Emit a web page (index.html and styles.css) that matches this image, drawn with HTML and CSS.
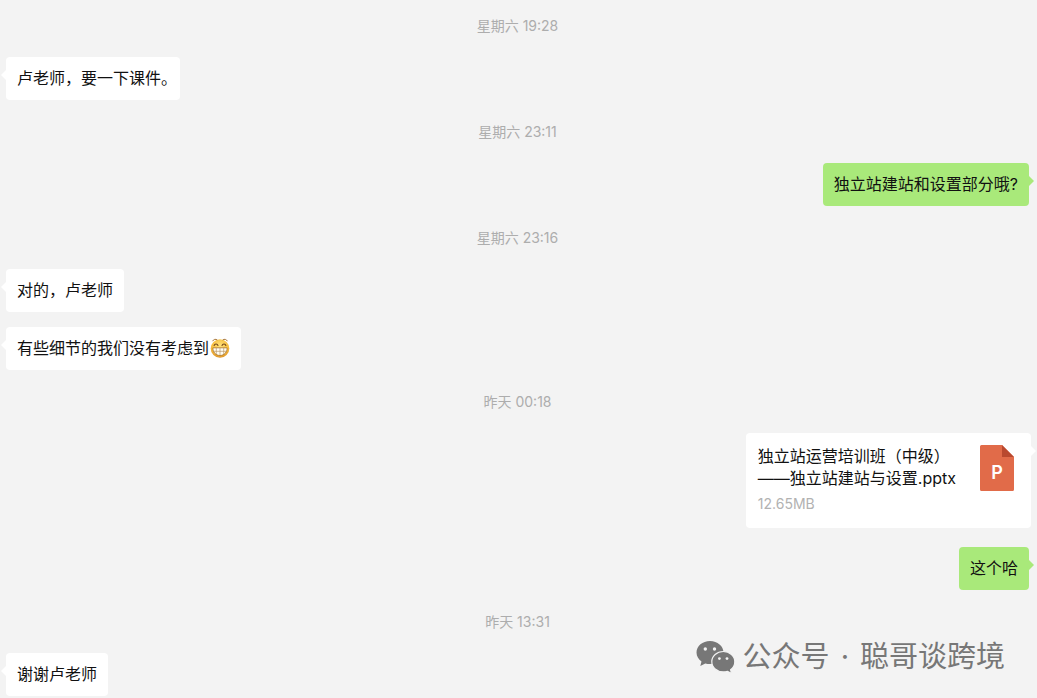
FILE: index.html
```html
<!DOCTYPE html>
<html lang="zh-CN">
<head>
<meta charset="utf-8">
<meta name="viewport" content="width=device-width, initial-scale=1">
<title>聊天记录</title>
<link rel="stylesheet" href="styles.css">
</head>
<body>
<main class="chat">
  <time class="stamp">星期六 19:28</time>
  <p class="bubble in">卢老师，要一下课件<span class="stop">。</span></p>
  <time class="stamp">星期六 23:11</time>
  <p class="bubble out">独立站建站和设置部分哦?</p>
  <time class="stamp">星期六 23:16</time>
  <p class="bubble in">对的，卢老师</p>
  <p class="bubble in">有些细节的我们没有考虑到<svg class="emoji" viewBox="0 0 20 20" role="img" aria-label="呲牙">
    <defs>
      <radialGradient id="face" cx=".5" cy=".35" r=".65">
        <stop offset="0" stop-color="#ffe27a"/>
        <stop offset=".7" stop-color="#f7bd3c"/>
        <stop offset="1" stop-color="#dc922a"/>
      </radialGradient>
    </defs>
    <circle cx="10" cy="10.5" r="9.3" fill="url(#face)"/>
    <path d="M2.600 3.200C3.400 1.300 5.800.7 7.300 2M12.700 2c1.500-1.300 3.900-.7 4.700 1.200" fill="none" stroke="#a8763c" stroke-width="1"/>
    <path d="M4.200 7.400c.6-1.900 3-1.900 3.700 0M12.100 7.400c.7-1.900 3.100-1.900 3.700 0" fill="none" stroke="#70451c" stroke-width="1.200" stroke-linecap="round"/>
    <path d="M2.900 9.800h14.200c.2 4.100-2.800 7.700-7.100 7.700S2.700 13.900 2.900 9.800z" fill="#fffdf4" stroke="#a8712a" stroke-width=".8"/>
    <path d="M3.200 13.300h13.600M6.300 10v6.500M10 10v7.300M13.700 10v6.500" stroke="#b99868" stroke-width=".7"/>
  </svg></p>
  <time class="stamp">昨天 00:18</time>
  <article class="file">
    <div class="file-text">
      <h2 class="file-name">独立站运营培训班（中级）<br>——独立站建站与设置.pptx</h2>
      <span class="file-size">12.65MB</span>
    </div>
    <div class="file-icon">
      <svg class="file-sheet" viewBox="0 0 34 46" aria-hidden="true">
        <path d="M1.500 0H22l12 12v32.500a1.500 1.500 0 0 1-1.500 1.500h-31A1.500 1.500 0 0 1 0 44.500v-43A1.500 1.500 0 0 1 1.500 0z" fill="#e16b49"/>
        <path d="M22 0l12 12H22z" fill="#b9492f"/>
      </svg>
      <span class="file-letter">P</span>
    </div>
  </article>
  <p class="bubble out">这个哈</p>
  <time class="stamp">昨天 13:31</time>
  <p class="bubble in">谢谢卢老师</p>
</main>
<footer class="account">
  <svg class="account-logo" viewBox="0 0 40 34" aria-hidden="true">
    <path d="M14 1C6.500 1 .5 6.100.5 12.600c0 3.700 2 6.900 5 9L4.300 26l5-2.600c1.500.4 3.100.7 4.700.7 7.500 0 13.500-5.100 13.500-11.500S21.500 1 14 1z" fill="#777"/>
    <path d="M27.300 11.500c-6.400 0-11.500 4.500-11.500 10.200s5.100 10.200 11.500 10.200c1.500 0 2.900-.2 4.200-.6l4.100 2.300-1-3.800c2.600-1.900 4.200-4.800 4.200-8.100 0-5.700-5.100-10.200-11.500-10.200z" fill="#777" stroke="#f3f3f3" stroke-width="1.200"/>
    <g fill="#f3f3f3">
      <circle cx="9.300" cy="9" r="1.700"/><circle cx="18.500" cy="9" r="1.700"/>
      <circle cx="23.400" cy="18.600" r="1.400"/><circle cx="31" cy="18.600" r="1.400"/>
    </g>
  </svg>
  <span class="account-text">
    <span>公众号</span>
    <span>·</span>
    <span>聪哥谈跨境</span>
  </span>
</footer>
</body>
</html>
```
FILE: styles.css
```css
* {
  box-sizing: border-box;
}

body {
  margin: 0;
  background: #f3f3f3;
  color: #111;
  font-family: Inter, "Noto Sans CJK SC", sans-serif;
}

.chat {
  display: flex;
  flex-direction: column;
  padding: 16px 8px 2px 6px;
}

.stamp {
  align-self: center;
  margin-bottom: 22px;
  color: #adadad;
  font-size: 14px;
  line-height: 19px;
}

.bubble {
  position: relative;
  align-self: flex-start;
  margin: 0;
  padding: 10px 11px;
  border-radius: 4px;
  background: #fff;
  font-size: 16px;
  line-height: 23px;
}

.bubble + .stamp {
  margin-top: 22px;
}

.bubble + .bubble {
  margin-top: 15px;
}

.stop {
  font-feature-settings: "halt";
}

.out {
  align-self: flex-end;
  background: #a9e97a;
}

.bubble::after,
.file::after {
  content: "";
  position: absolute;
  top: 13px;
  border: 5px solid transparent;
}

.in::after {
  right: 100%;
  border-left-width: 0;
  border-right-color: #fff;
}

.out::after,
.file::after {
  left: 100%;
  border-right-width: 0;
  border-left-color: #a9e97a;
}

.file::after {
  border-left-color: #fff;
}

.emoji {
  display: inline-block;
  width: 20px;
  height: 20px;
  margin-left: 1px;
  vertical-align: -4px;
}

.file {
  position: relative;
  display: flex;
  align-self: flex-end;
  justify-content: space-between;
  gap: 24px;
  margin-right: -2px;
  margin-bottom: 19px;
  padding: 12px 17px 12px 12px;
  border-radius: 4px;
  background: #fff;
  min-height: 95px;
}

.file-name {
  margin: 0 0 5px;
  font-size: 16px;
  font-weight: 400;
  line-height: 22px;
}

.file-size {
  display: block;
  color: #b2b2b2;
  font-size: 14px;
  line-height: 19px;
}

.file-icon {
  position: relative;
  width: 34px;
  height: 46px;
}

.file-sheet {
  display: block;
  width: 34px;
  height: 46px;
}

.file-letter {
  position: absolute;
  inset: 18px 0 auto;
  color: #fff;
  font-size: 18px;
  font-weight: 600;
  line-height: 20px;
  text-align: center;
}

.account {
  position: absolute;
  right: 32px;
  bottom: 20px;
  display: flex;
  align-items: center;
  gap: 7px;
  color: #777;
  font-size: 29px;
  line-height: 42px;
  white-space: nowrap;
}

.account-text {
  display: flex;
  gap: 11px;
}

.account-logo {
  width: 40px;
  height: 34px;
}
```
